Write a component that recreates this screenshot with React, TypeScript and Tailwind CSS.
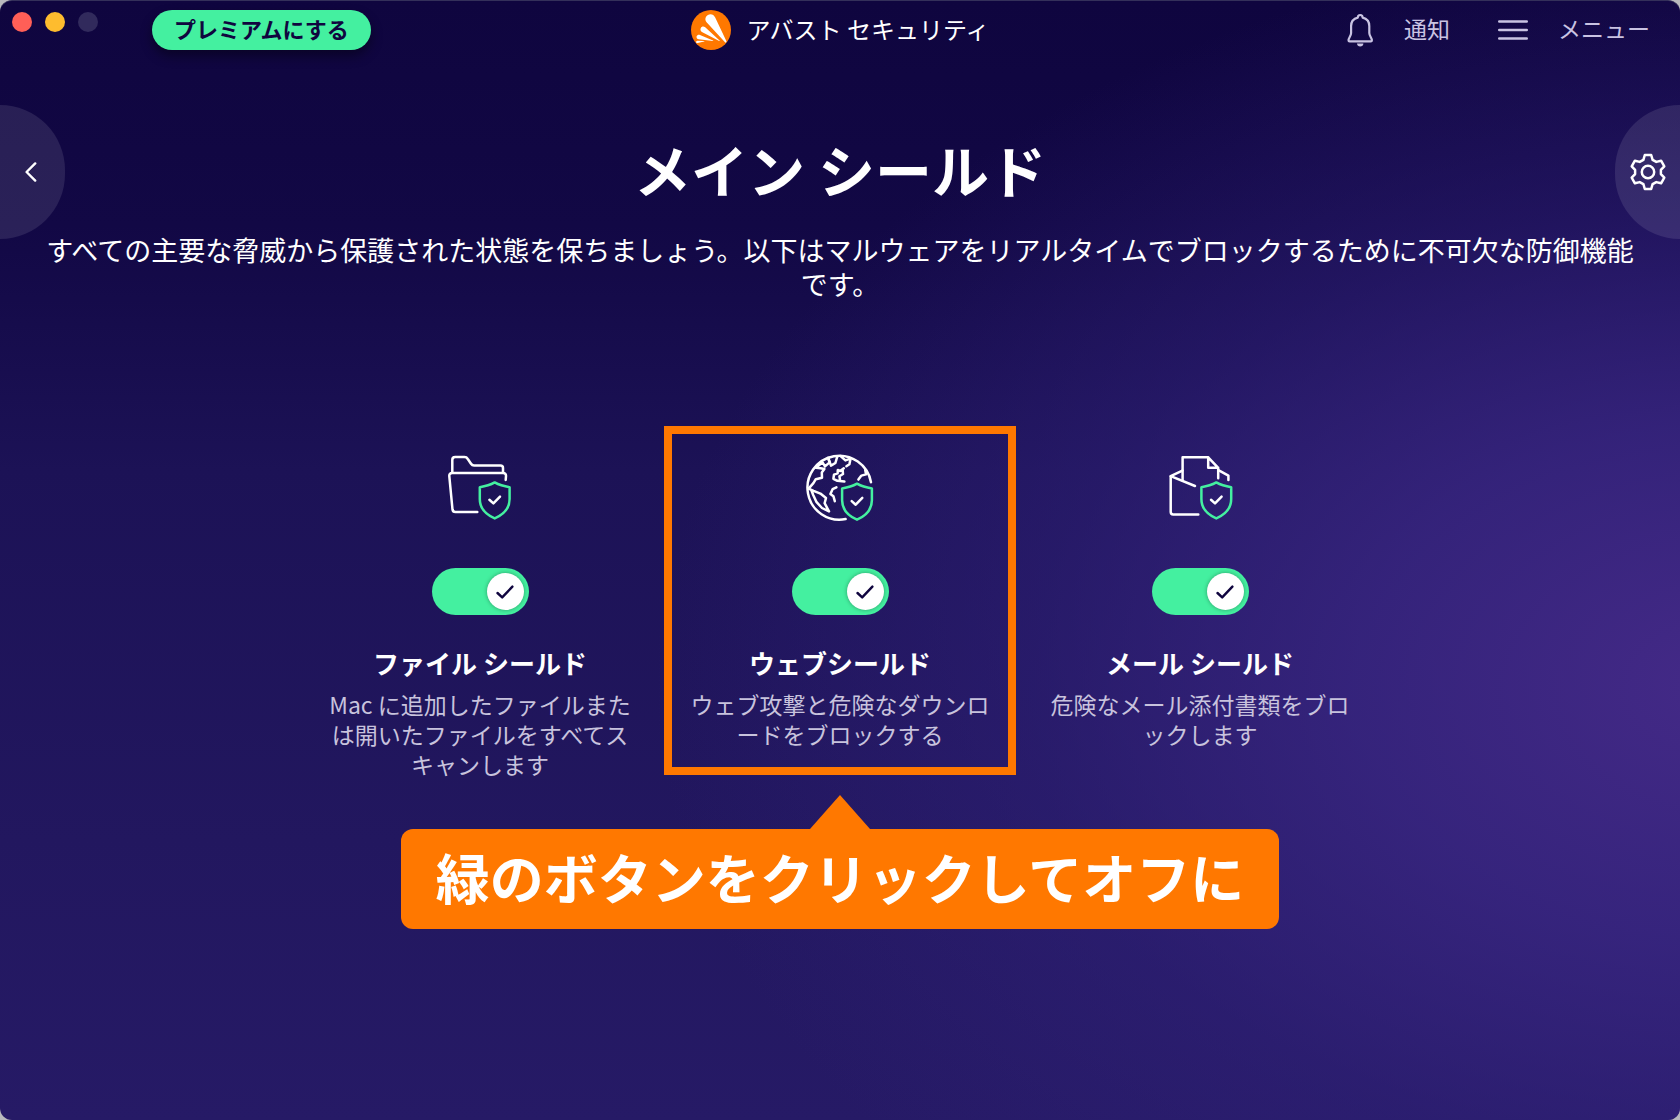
import type { ReactNode } from "react";

type Shield = {
  id: string;
  title: string;
  description: string;
  icon: ReactNode;
  highlighted?: boolean;
};

const LogoIcon = () => (
  <svg width="40" height="40" viewBox="0 0 40 40" aria-hidden="true">
    <circle cx="20" cy="20" r="20" fill="#ff7800" />
    <g fill="#fff">
      <path d="M35 32.6C35.6 32.2 35.6 31.4 35.2 30.7L24.2 7.6C22.8 4.4 19.6 3.4 16.9 5C14.1 6.8 13.6 10 15.8 12.6L34 32.3C34.3 32.7 34.7 32.8 35 32.6Z" />
      <path d="M28.6 30.4L14.2 17.2C12.6 15.9 10.6 16.2 9.8 17.9C9 19.6 9.6 21.4 11.4 22.3L28.2 31C28.8 31.2 29 30.8 28.6 30.4Z" />
      <path d="M22 30.4L9 25C7.4 24.5 6 25.2 5.6 26.5C5.3 28 6.2 29.1 7.8 29.3L21.8 31C22.3 31 22.4 30.6 22 30.4Z" />
      <path d="M13 30.9L6.4 30.8C5 30.9 4.6 32.4 5.8 33.3L13.1 31.6C13.5 31.4 13.5 31 13 30.9Z" />
    </g>
  </svg>
);

const BellIcon = () => (
  <svg width="28" height="34" viewBox="0 0 28 34" fill="none" stroke="currentColor" strokeWidth="2.2" strokeLinejoin="round" aria-hidden="true">
    <path d="M11.8 4.6C11.8 2.8 12.7 2 14.2 2C15.7 2 16.6 2.8 16.6 4.6C20.8 5.6 23.3 8.8 23.3 13V20C23.3 22.6 25.9 25 25.9 27.2C25.9 28 25.5 28.4 24.8 28.4H3.6C2.9 28.4 2.5 28 2.5 27.2C2.5 25 5.1 22.6 5.1 20V13C5.1 8.8 7.6 5.6 11.8 4.6Z" />
    <path d="M11 30.6H17.4C17.4 32.4 16 33.6 14.2 33.6C12.4 33.6 11 32.4 11 30.6Z" fill="currentColor" stroke="none" />
  </svg>
);

const MenuIcon = () => (
  <svg width="30" height="22" viewBox="0 0 30 22" fill="none" stroke="currentColor" strokeWidth="2.4" aria-hidden="true">
    <path d="M1.2 2.5H28.8M1.2 11H28.8M1.2 19.5H28.8" strokeLinecap="round" />
  </svg>
);

const BackIcon = () => (
  <svg width="12" height="20" viewBox="0 0 12 20" fill="none" stroke="currentColor" strokeWidth="2.4" strokeLinecap="round" strokeLinejoin="round" aria-hidden="true">
    <path d="M10.2 1.4L1.6 10L10.2 18.6" />
  </svg>
);

const GearIcon = () => (
  <svg width="40" height="40" viewBox="-20 -20 40 40" fill="none" stroke="currentColor" strokeWidth="2.5" strokeLinejoin="round" aria-hidden="true">
    <path d="M-3.2 -17H3.2L4.6 -12.2L8.3 -10.1L13.1 -11.3L16.3 -5.7L12.9 -2.1V2.1L16.3 5.7L13.1 11.3L8.3 10.1L4.6 12.2L3.2 17H-3.2L-4.6 12.2L-8.3 10.1L-13.1 11.3L-16.3 5.7L-12.9 2.1V-2.1L-16.3 -5.7L-13.1 -11.3L-8.3 -10.1L-4.6 -12.2Z" />
    <circle r="6.2" />
  </svg>
);

const ShieldMark = () => (
  <>
    <path
      d="M50.7 30.4C46.5 32.8 41 34.4 35.8 35.2V47C35.8 56 42 62.6 50.7 66.4C59.4 62.6 65.6 56 65.6 47V35.2C60.4 34.4 54.9 32.8 50.7 30.4Z"
      stroke="#44f0a0"
    />
    <path d="M45.4 47.8L49.4 51.4L56 44.6" />
  </>
);

const iconProps = {
  width: 72,
  height: 72,
  viewBox: "0 0 72 72",
  fill: "none",
  stroke: "#fff",
  strokeWidth: 2.5,
  strokeLinecap: "round",
  strokeLinejoin: "round",
  "aria-hidden": true,
} as const;

const FolderIcon = () => (
  <svg {...iconProps}>
    <path d="M8.3 20.5V8C8.3 6.2 9.4 5.1 11.2 5.1H20.4C22 5.1 23 5.7 23.8 7L27 11.8C27.8 13 28.6 13.5 30 13.5H56.4C58.1 13.5 59 14.4 59 16V20.5" />
    <path d="M33.3 60H11.4C9.7 60 8.7 59.1 8.5 57.5L5.3 24.2C5.1 22.2 6.2 21 8.1 21H59.2C61.1 21 62.1 22.2 62 24L61.7 28" />
    <ShieldMark />
  </svg>
);

const GlobeIcon = () => (
  <svg {...iconProps}>
    <path d="M41.6 67.1A32 32 0 1 1 67 30.2" />
    <path d="M4.6 36.6L9.4 31.2L11.8 27.2L18 25.8L17.8 20.4L20.4 17L16.6 16.2L12 15.8L18.4 10.2L21 14.4L25.6 10.4L24.2 6" />
    <path d="M4.6 36.6L9.6 38.8L16.4 41.6L22 46L20.6 51.2L25 59.4L18 56L12.6 50.2L9.2 43L7.4 38.2" />
    <path d="M24.2 6L27 13.6L31.4 11L33.4 4.2" />
    <path d="M36.6 4L41.4 8.4L46.6 6.6L45.4 12.2L42.4 14.2" />
    <path d="M39.8 16.2L36.2 19L33.8 18L33.6 21.4L30 22.6L29.4 26.8L33.4 28.8L40.4 29.6M38.6 17L39 22L35.4 24.2L36 27.6" />
    <path d="M32.4 35.4L28.6 37.2L26.4 42L29.4 44.2L30.8 49.2" />
    <path d="M61.2 17.8L62 22.4L57.4 23.6L54.4 27.6" />
    <g transform="translate(2.3 1.3)">
      <ShieldMark />
    </g>
  </svg>
);

const MailIcon = () => (
  <svg {...iconProps}>
    <path d="M34.3 62.4H9.2C7.6 62.4 6.7 61.5 6.7 60V24.2L18.4 18.6" />
    <path d="M6.7 24.2L31 34" />
    <path d="M18.6 28.6V5.3H44.2L54.2 15.8V26.2M44.2 5.3V15.8H54.2" />
    <path d="M54.4 18.2L64.4 23.6V28" />
    <g transform="translate(1.6)">
      <ShieldMark />
    </g>
  </svg>
);

const shields: Shield[] = [
  {
    id: "file",
    title: "ファイル シールド",
    description: "Mac に追加したファイルまたは開いたファイルをすべてスキャンします",
    icon: <FolderIcon />,
  },
  {
    id: "web",
    title: "ウェブシールド",
    description: "ウェブ攻撃と危険なダウンロードをブロックする",
    icon: <GlobeIcon />,
    highlighted: true,
  },
  {
    id: "mail",
    title: "メール シールド",
    description: "危険なメール添付書類をブロックします",
    icon: <MailIcon />,
  },
];

const Toggle = ({ id }: { id: string }) => (
  <span className="relative mt-11 block h-[47px] w-[97px]">
    <input
      id={id}
      type="checkbox"
      defaultChecked
      className="peer block h-full w-full cursor-pointer appearance-none rounded-full bg-white/30 checked:bg-[#44f0a0]"
    />
    <span className="pointer-events-none absolute top-[5px] left-[5px] flex size-[37px] items-center justify-center rounded-full bg-white shadow-[0_0_4px_rgba(0,0,0,0.35)] peer-checked:right-[5px] peer-checked:left-auto">
      <svg width="18" height="14" viewBox="0 0 18 14" fill="none" stroke="#10053f" strokeWidth="2.4" strokeLinecap="round" strokeLinejoin="round" aria-hidden="true">
        <path d="M1.5 8L6.2 12.4L16.4 1.6" />
      </svg>
    </span>
  </span>
);

const ShieldCard = ({ id, title, description, icon, highlighted }: Shield) => (
  <section
    className={`flex w-[352px] flex-col items-center border-8 px-3 pt-[18px] text-center ${highlighted ? "border-[#ff7800] pb-[18px]" : "border-transparent"}`}
  >
    {icon}
    <Toggle id={id} />
    <h2 className="mt-7 text-[26px] leading-10 font-bold">
      <label htmlFor={id}>{title}</label>
    </h2>
    <p className="mt-1.5 text-[23px] leading-[30px] text-[#c8c3dd] [line-break:loose]">
      {description}
    </p>
  </section>
);

const TitleBar = () => (
  <header className="grid h-[58px] grid-cols-[1fr_auto_1fr] items-center px-3 text-[23px]">
    <div className="flex items-center">
      <div className="mb-4 flex gap-[13px]">
        <button type="button" aria-label="閉じる" className="size-5 rounded-full bg-[#ff5f57]" />
        <button type="button" aria-label="しまう" className="size-5 rounded-full bg-[#febc2e]" />
        <button type="button" aria-label="拡大" className="size-5 rounded-full bg-[#312a5c]" />
      </div>
      <button
        type="button"
        className="ml-[54px] rounded-full bg-[#44f0a0] px-[22px] pb-1 text-[22px] leading-9 font-bold text-[#10053f] shadow-[0_6px_12px_rgba(0,0,0,0.4)]"
      >
        プレミアムにする
      </button>
    </div>
    <div className="flex items-center gap-4 text-2xl">
      <LogoIcon />
      <span className="pb-[3px]">アバスト セキュリティ</span>
    </div>
    <div className="flex items-center justify-end gap-12 pr-[18px] text-[#c9c3e2]">
      <button type="button" className="flex items-center gap-[30px]">
        <BellIcon />
        <span className="pb-[3px]">通知</span>
      </button>
      <button type="button" className="flex items-center gap-[30px]">
        <MenuIcon />
        <span className="pb-[3px]">メニュー</span>
      </button>
    </div>
  </header>
);

export default function App() {
  return (
    <div lang="ja" className="min-h-screen bg-[#b9b9bd] font-['Noto_Sans_CJK_JP',sans-serif]">
      <div className="min-h-screen overflow-hidden rounded-xl border-t border-[#34305a] bg-[radial-gradient(ellipse_64%_66%_at_103%_61%,rgba(72,44,140,0.9),rgba(60,40,134,0.75)_35%,rgba(50,34,124,0.45)_65%,transparent),linear-gradient(to_bottom,#0f053f,#120845_20%,#1c1256_42%,#22175f_75%,#261a66)] text-white">
        <TitleBar />
        <main>
          <div className="mt-[46px] flex items-center justify-between">
            <button
              type="button"
              aria-label="戻る"
              className="flex h-[134px] w-[65px] items-center rounded-r-full bg-white/10 pl-[25px]"
            >
              <BackIcon />
            </button>
            <h1 className="pb-2 text-[57px] leading-none font-bold">メイン シールド</h1>
            <button
              type="button"
              aria-label="設定"
              className="flex h-[134px] w-[65px] items-center justify-end rounded-l-full bg-white/10 pr-3"
            >
              <GearIcon />
            </button>
          </div>
          <p className="-mt-1.5 px-9 text-center text-[27px] leading-[34px]">
            すべての主要な脅威から保護された状態を保ちましょう。以下はマルウェアをリアルタイムでブロックするために不可欠な防御機能です。
          </p>
          <div className="mt-[125px] flex items-start justify-center gap-2">
            {shields.map((shield) => (
              <ShieldCard key={shield.id} {...shield} />
            ))}
          </div>
          <div className="mt-2 flex flex-col items-center pb-16">
            <svg width="60" height="34" viewBox="0 0 60 34" aria-hidden="true">
              <path d="M30 0L60 34H0Z" fill="#ff7800" />
            </svg>
            <p className="rounded-xl bg-[#ff7800] px-[35px] pb-1 text-[54px] leading-[96px] font-bold">
              緑のボタンをクリックしてオフに
            </p>
          </div>
        </main>
      </div>
    </div>
  );
}
